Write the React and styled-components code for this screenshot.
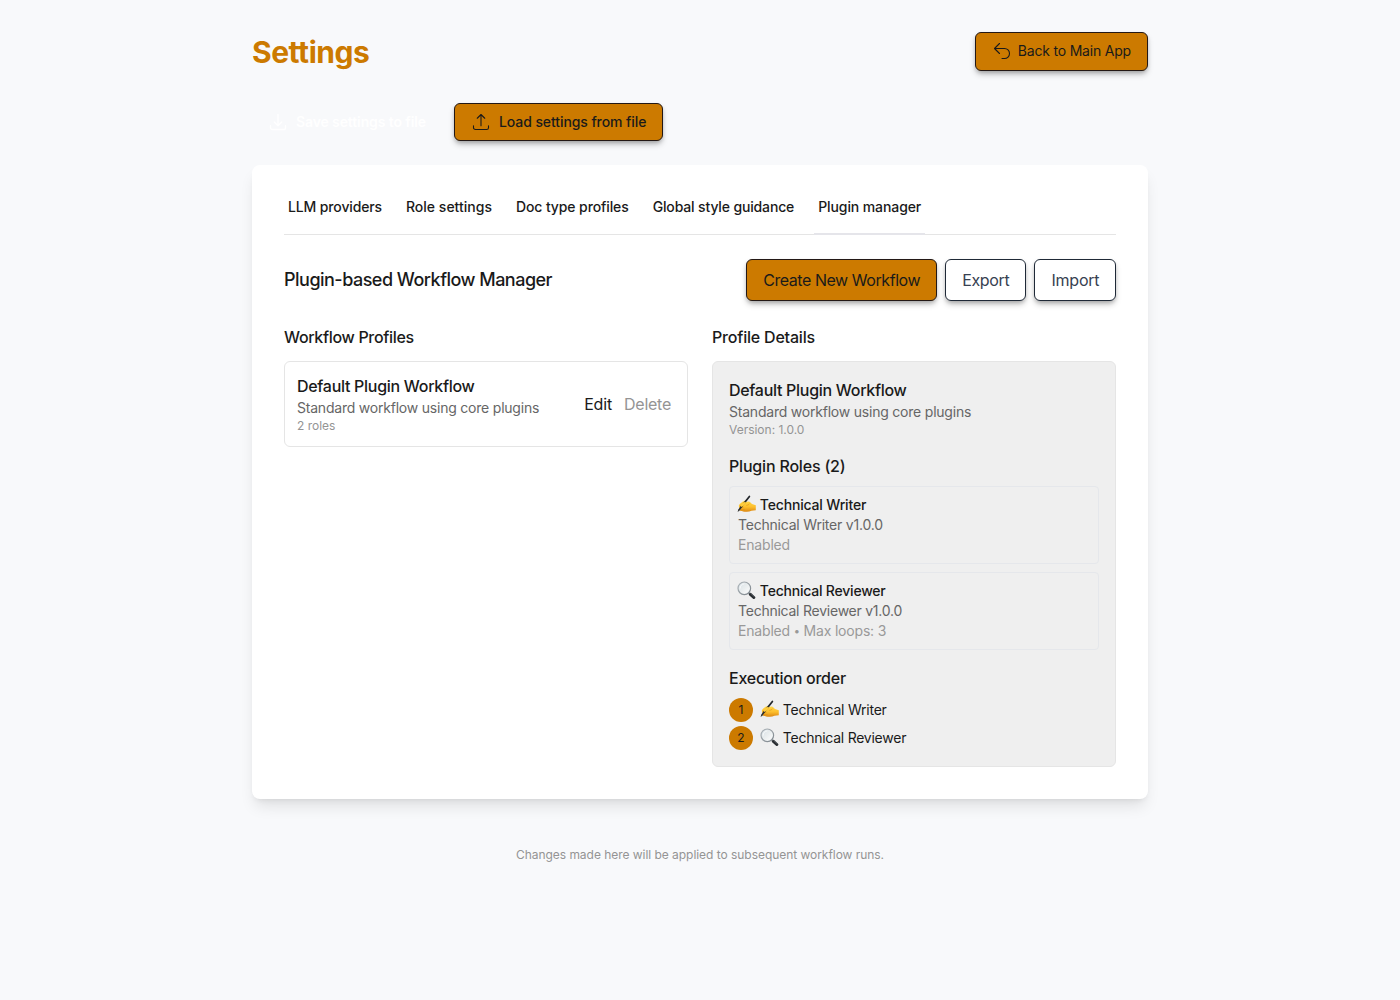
import React from 'react';
import styled, { createGlobalStyle, css } from 'styled-components';

const GlobalStyle = createGlobalStyle`
  *, *::before, *::after { box-sizing: border-box; }
  body {
    margin: 0;
    background: #f8f9fb;
    color: #1a1a1a;
    font-family: Inter, "Liberation Sans", sans-serif;
    font-size: 16px;
    line-height: 24px;
  }
  h1, h2, h3, h4, p, ol { margin: 0; padding: 0; }
  button { font-family: inherit; }
`;

const tracking = css`
  letter-spacing: ${(p) => p.$track || 0}px;
  white-space: nowrap;
`;

const Page = styled.main`
  width: 896px;
  min-height: 1000px;
  margin: 0 auto;
  padding-top: 32px;
`;

const Header = styled.header`
  display: flex;
  align-items: center;
  justify-content: space-between;
  height: 39px;
  margin-bottom: 32px;
`;

const PageTitle = styled.h1`
  color: #cc7a00;
  font-size: 30px;
  font-weight: 700;
  line-height: 36px;
  ${tracking}
`;

const buttonShadow = '0 4px 6px -1px rgba(0, 0, 0, 0.25), 0 2px 4px -1px rgba(0, 0, 0, 0.2)';

const buttonColors = {
  primary: css`
    background: #cc7a00;
    color: #1a1a1a;
    border-color: #231815;
    box-shadow: ${buttonShadow};
  `,
  outline: css`
    background: #fff;
    color: #374151;
    border-color: #1f2937;
    box-shadow: ${buttonShadow};
  `,
};

const Button = styled.button`
  display: flex;
  align-items: center;
  height: 42px;
  padding: 0 15.6px 0 16.4px;
  border: 1px solid transparent;
  border-radius: 6px;
  font-size: 16px;
  font-weight: 400;
  line-height: 24px;
  ${tracking}
  ${(p) => buttonColors[p.$variant]}
`;

const FileButton = styled(Button)`
  height: 38px;
  padding: 0 16px;
  gap: 8px;
  font-size: 14px;
  font-weight: 500;
  line-height: 20px;
`;

const BackButton = styled(FileButton)`
  height: 39px;
  padding-bottom: 1px;
  gap: 6px;
  font-weight: 400;
`;

const GhostButton = styled(FileButton)`
  width: 190px;
  border: 0;
  background: transparent;
  color: #fff;
  font-weight: 600;

  svg { stroke-width: 1.6; }
`;

const FileBar = styled.div`
  display: flex;
  gap: 12px;
  margin-bottom: 24px;
`;

const Card = styled.section`
  padding: 32px;
  border-radius: 8px;
  background: #fff;
  box-shadow: 0 10px 15px -3px rgba(0, 0, 0, 0.1), 0 4px 6px -4px rgba(0, 0, 0, 0.1);
`;

const TabList = styled.nav`
  display: flex;
  gap: 16px;
  height: 38px;
  margin-bottom: 24px;
  border-bottom: 1px solid #e5e5e5;
`;

const Tab = styled.button`
  height: 38px;
  padding: 0 4px 16px;
  border: 0;
  border-bottom: 2px solid ${(p) => (p.$active ? '#e5e5ea' : 'transparent')};
  background: none;
  color: #1a1a1a;
  font-size: 14px;
  font-weight: 500;
  line-height: 20px;
  ${tracking}
`;

const Toolbar = styled.div`
  display: flex;
  align-items: center;
  justify-content: space-between;
  margin-bottom: 24px;
`;

const ButtonGroup = styled.div`
  display: flex;
  gap: 8px;
`;

const ManagerTitle = styled.h2`
  font-size: 18px;
  font-weight: 500;
  line-height: 28px;
  ${tracking}
`;

const Columns = styled.div`
  display: grid;
  grid-template-columns: 1fr 1fr;
  align-items: start;
  gap: 24px;
`;

const Heading = styled.h3`
  margin-bottom: ${(p) => p.$gap || 0}px;
  font-size: 16px;
  font-weight: 500;
  line-height: 24px;
  ${tracking}
`;

const Description = styled.p`
  color: #666;
  font-size: 14px;
  line-height: 20px;
  ${tracking}
`;

const Status = styled(Description)`
  color: #999;
`;

const Meta = styled.p`
  color: #949494;
  font-size: 12px;
  line-height: 16px;
  ${tracking}
`;

const ProfileRow = styled.article`
  display: flex;
  align-items: center;
  justify-content: space-between;
  padding: 12px;
  border: 1px solid #e5e5e5;
  border-radius: 6px;
`;

const Actions = styled.div`
  display: flex;
  gap: 4px;
`;

const TextButton = styled.button`
  padding: 0 4px;
  border: 0;
  background: none;
  color: ${(p) => (p.$muted ? '#949494' : '#1a1a1a')};
  font-size: 16px;
  line-height: 24px;
  ${tracking}
`;

const Details = styled.article`
  padding: 16px;
  border: 1px solid #e5e5e5;
  border-radius: 6px;
  background: #efefef;
`;

const Summary = styled.div`
  margin-bottom: 16px;
`;

const RoleList = styled.div`
  display: grid;
  gap: 8px;
  margin-bottom: 16px;
`;

const RoleCard = styled.div`
  padding: 8px;
  border: 1px solid #e5e7eb;
  border-radius: 4px;
`;

const RoleName = styled.div`
  display: flex;
  align-items: center;
  gap: 3px;
  height: 20px;
  font-size: 14px;
  font-weight: ${(p) => p.$weight || 400};
  line-height: 20px;
  ${tracking}

  svg {
    flex: none;
    margin: -3px 0.6px 0 -0.8px;
  }
`;

const Bullet = styled.span`
  display: inline-block;
  width: 6px;
  font-size: 11px;
  line-height: 10px;
  text-align: center;
  vertical-align: 1px;
`;

const Steps = styled.ol`
  display: grid;
  gap: 4px;
  list-style: none;
`;

const Step = styled.li`
  display: flex;
  align-items: center;
  gap: 8px;
`;

const StepNumber = styled.span`
  display: flex;
  align-items: center;
  justify-content: center;
  width: 24px;
  height: 24px;
  border-radius: 50%;
  background: #cc7a00;
  font-size: 12px;
  line-height: 16px;
`;

const Footer = styled.footer`
  display: flex;
  justify-content: center;
  padding-top: 48px;
`;

const Outline = styled.svg`
  width: 20px;
  height: 20px;
  flex: none;
  fill: none;
  stroke: currentColor;
  stroke-width: 1.3;
  stroke-linecap: round;
  stroke-linejoin: round;
`;

const TRAY = 'M3 16.5v2.25A2.25 2.25 0 005.25 21h13.5A2.25 2.25 0 0021 18.75V16.5';
const icons = {
  back: 'M9 15L3 9m0 0l6-6M3 9h12a6 6 0 010 12h-3',
  download: `${TRAY}M16.5 12L12 16.5m0 0L7.5 12m4.5 4.5V3`,
  upload: `${TRAY}m-13.5-9L12 3m0 0l4.5 4.5M12 3v13.5`,
};

const Icon = ({ name }) => (
  <Outline viewBox="0 0 24 24" aria-hidden="true">
    <path d={icons[name]} />
  </Outline>
);

const WritingHand = () => (
  <svg width="19" height="18" viewBox="0 0 19 18" role="img" aria-label="Writing hand">
    <defs>
      <linearGradient id="hand" x1="0" y1="0" x2="0" y2="1">
        <stop offset="0" stopColor="#ffd84a" />
        <stop offset="0.55" stopColor="#fdbf2d" />
        <stop offset="1" stopColor="#dc8712" />
      </linearGradient>
    </defs>
    <path d="M2.2 9.8C3.6 7.9 5.4 6.3 7.3 5.9c1.1-.2 2 .4 1.8 1.2l2.2-.6c.8-.2 1.5.2 1.9.8l1.8 1.8 3.8 1.2v4.9l-4.3.5c-1.5.8-3.4 1.2-5.3 1.1-2.1 0-4.4-.2-5.6-.8-.9-.4-.9-1.3-.3-1.8-.8-.3-1.1-1-.8-1.7-.7-.5-.9-1.8-.3-2.7z" fill="url(#hand)" />
    <path d="M3 14.2c1.3.5 2.8.7 4.3.5M2.6 12.4c1.2.3 2.5.3 3.6 0M9.6 10.3c1.3-.1 2.2-.6 2.8-1.4" fill="none" stroke="#d98a14" strokeWidth="0.5" strokeLinecap="round" />
    <path d="M12.4 1.5L4.4 11.6" stroke="#23272b" strokeWidth="1.7" strokeLinecap="round" />
    <path d="M4.2 10.6L1.3 14.4.6 16.9l2-1.3 2.6-3.5z" fill="#30302d" />
    <path d="M3.6 10c1.5-2.1 3.7-3.4 5.3-2.8-.3 2.2-2.5 3.9-4.9 4.9z" fill="#ffcc3d" />
  </svg>
);

const Magnifier = () => (
  <svg width="19" height="18" viewBox="0 0 19 18" role="img" aria-label="Magnifying glass">
    <defs>
      <linearGradient id="lens" x1="0" y1="0" x2="1" y2="1">
        <stop offset="0" stopColor="#d5dfe5" />
        <stop offset="0.5" stopColor="#eaeeef" />
        <stop offset="1" stopColor="#fff" />
      </linearGradient>
      <linearGradient id="rim" x1="0" y1="0" x2="1" y2="1">
        <stop offset="0" stopColor="#b0b7bc" />
        <stop offset="1" stopColor="#7d858b" />
      </linearGradient>
    </defs>
    <path d="M11.3 11.5l2.2 2" stroke="#8b9298" strokeWidth="2" />
    <path d="M13.4 13.4l3.4 3.1" stroke="#292d31" strokeWidth="3" strokeLinecap="round" />
    <path d="M13.8 12.7l3.2 2.8" stroke="#697077" strokeWidth="0.6" strokeLinecap="round" />
    <circle cx="7.3" cy="7.3" r="6.3" fill="url(#lens)" stroke="url(#rim)" strokeWidth="1.2" />
    <path d="M3.1 7.2a4.3 4.3 0 013.8-4.3" fill="none" stroke="#fff" strokeWidth="0.8" strokeLinecap="round" />
  </svg>
);

const tabs = [
  ['LLM providers', -0.135],
  ['Role settings', 0.008],
  ['Doc type profiles', -0.11],
  ['Global style guidance', -0.145],
  ['Plugin manager', -0.1],
];

export default function App() {
  return (
    <>
      <GlobalStyle />
      <Page>
        <Header>
          <PageTitle $track={-0.45}>Settings</PageTitle>
          <BackButton $variant="primary" $track={-0.2}>
            <Icon name="back" />
            Back to Main App
          </BackButton>
        </Header>

        <FileBar>
          <GhostButton $track={-0.11}>
            <Icon name="download" />
            Save settings to file
          </GhostButton>
          <FileButton $variant="primary" $track={-0.09}>
            <Icon name="upload" />
            Load settings from file
          </FileButton>
        </FileBar>

        <Card>
          <TabList>
            {tabs.map(([label, track]) => (
              <Tab key={label} $track={track} $active={label === 'Plugin manager'}>
                {label}
              </Tab>
            ))}
          </TabList>

          <Toolbar>
            <ManagerTitle $track={-0.51}>Plugin-based Workflow Manager</ManagerTitle>
            <ButtonGroup>
              <Button $variant="primary" $track={-0.437}>Create New Workflow</Button>
              <Button $variant="outline" $track={-0.33}>Export</Button>
              <Button $variant="outline" $track={-0.2}>Import</Button>
            </ButtonGroup>
          </Toolbar>

          <Columns>
            <div>
              <Heading $gap={12} $track={-0.325}>Workflow Profiles</Heading>
              <ProfileRow>
                <div>
                  <Heading as="h4" $track={-0.29}>Default Plugin Workflow</Heading>
                  <Description $track={-0.215}>Standard workflow using core plugins</Description>
                  <Meta>2 roles</Meta>
                </div>
                <Actions>
                  <TextButton $track={-0.17}>Edit</TextButton>
                  <TextButton $muted $track={-0.25}>Delete</TextButton>
                </Actions>
              </ProfileRow>
            </div>

            <div>
              <Heading $gap={12} $track={-0.2}>Profile Details</Heading>
              <Details>
                <Summary>
                  <Heading as="h4" $track={-0.29}>Default Plugin Workflow</Heading>
                  <Description $track={-0.215}>Standard workflow using core plugins</Description>
                  <Meta $track={-0.01}>Version: 1.0.0</Meta>
                </Summary>

                <Heading as="h4" $gap={8} $track={-0.19}>Plugin Roles (2)</Heading>
                <RoleList>
                  <RoleCard>
                    <RoleName $weight={500} $track={-0.17}>
                      <WritingHand />
                      Technical Writer
                    </RoleName>
                    <Description $track={-0.21}>Technical Writer v1.0.0</Description>
                    <Status $track={-0.18}>Enabled</Status>
                  </RoleCard>
                  <RoleCard>
                    <RoleName $weight={500} $track={-0.21}>
                      <Magnifier />
                      Technical Reviewer
                    </RoleName>
                    <Description $track={-0.24}>Technical Reviewer v1.0.0</Description>
                    <Status $track={-0.18}>
                      Enabled <Bullet>•</Bullet> Max loops: 3
                    </Status>
                  </RoleCard>
                </RoleList>

                <Heading as="h4" $gap={8} $track={-0.245}>Execution order</Heading>
                <Steps>
                  <Step>
                    <StepNumber>1</StepNumber>
                    <RoleName $track={-0.225}>
                      <WritingHand />
                      Technical Writer
                    </RoleName>
                  </Step>
                  <Step>
                    <StepNumber>2</StepNumber>
                    <RoleName $track={-0.25}>
                      <Magnifier />
                      Technical Reviewer
                    </RoleName>
                  </Step>
                </Steps>
              </Details>
            </div>
          </Columns>
        </Card>

        <Footer>
          <Meta $track={-0.04}>Changes made here will be applied to subsequent workflow runs.</Meta>
        </Footer>
      </Page>
    </>
  );
}
